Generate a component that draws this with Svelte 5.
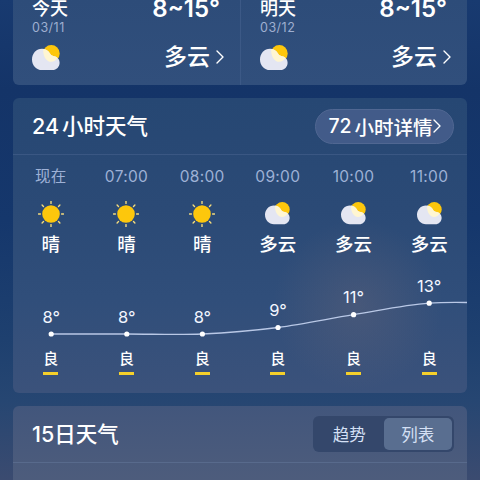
<script lang="ts">
	type Sky = 'sunny' | 'cloudy';

	const days = [
		{ name: '今天', date: '03/11', range: '8~15°', text: '多云' },
		{ name: '明天', date: '03/12', range: '8~15°', text: '多云' }
	];

	const hours: { time: string; sky: Sky; text: string; temp: number; y: number; air: string }[] = [
		{ time: '现在', sky: 'sunny', text: '晴', temp: 8, y: 66, air: '良' },
		{ time: '07:00', sky: 'sunny', text: '晴', temp: 8, y: 66, air: '良' },
		{ time: '08:00', sky: 'sunny', text: '晴', temp: 8, y: 66, air: '良' },
		{ time: '09:00', sky: 'cloudy', text: '多云', temp: 9, y: 59.5, air: '良' },
		{ time: '10:00', sky: 'cloudy', text: '多云', temp: 11, y: 46.7, air: '良' },
		{ time: '11:00', sky: 'cloudy', text: '多云', temp: 13, y: 35.2, air: '良' }
	];

	const STEP = 75.6;
	const rays = [0, 45, 90, 135, 180, 225, 270, 315];
	const px = (i: number) => 38.2 + i * STEP;

	// Smooth line through all hours, running on past the right edge
	const curve = $derived.by(() => {
		const pts = [...hours.map((h, i) => ({ x: px(i), y: h.y })), { x: px(6), y: 35.2 }];
		let d = `M${pts[0].x} ${pts[0].y}`;
		for (let i = 0; i < pts.length - 1; i++) {
			const a = pts[Math.max(i - 1, 0)];
			const b = pts[i];
			const c = pts[i + 1];
			const e = pts[Math.min(i + 2, pts.length - 1)];
			d += ` C${b.x + STEP / 3} ${b.y + (c.y - a.y) / 6} ${c.x - STEP / 3} ${c.y - (e.y - b.y) / 6} ${c.x} ${c.y}`;
		}
		return d;
	});

	let view = $state('列表');
</script>

{#snippet cloud(width: number)}
	<svg class="icon" {width} height={(width * 25) / 28} viewBox="0 0 28 25">
		<circle cx="19.3" cy="8.4" r="8.4" fill="#fdc70c" />
		<path
			d="M10 3.8c3.500 0 6.500 1.800 8 4.800.8 1.500 2 2.400 4.200 2.700 3.200.5 5.400 3.200 5.400 6.400 0 4-3 7.300-7.200 7.300H10C4.300 25 0 20.300 0 14.400S4.300 3.800 10 3.800z"
			fill="#e4e6f2"
		/>
		<path
			d="M11.200 5.400c0-.5 0-.9.1-1.400 3 .3 5.400 2 6.700 4.600.8 1.500 2 2.400 4.200 2.700 1.300.2 2.400.8 3.300 1.600-1.500 2.300-3.700 3.900-6.300 3.900-4.400 0-8-5-8-11.400z"
			fill="#fff6d2"
		/>
	</svg>
{/snippet}

{#snippet sun()}
	<svg class="icon" width="26" height="26" viewBox="-13 -13 26 26">
		<circle r="8.800" fill="#fdc70c" />
		{#each rays as angle (angle)}
			<line
				x1="0"
				y1="-10.600"
				x2="0"
				y2="-12.600"
				stroke="#f6dc7c"
				stroke-width="1.400"
				stroke-linecap="round"
				transform="rotate({angle})"
			/>
		{/each}
	</svg>
{/snippet}

{#snippet chevron(width: number, height: number)}
	<svg {width} {height} viewBox="0 0 8 14">
		<path d="M1 1l6 6-6 6" fill="none" stroke="#fff" stroke-width="1.400" stroke-linecap="round" stroke-linejoin="round" />
	</svg>
{/snippet}

<main>
	<section class="card days">
		{#each days as day (day.name)}
			<div class="day">
				<div class="row">
					<span class="name">{day.name}</span>
					<span class="range">{day.range}</span>
				</div>
				<div class="date">{day.date}</div>
				<div class="row weather">
					{@render cloud(28)}
					<span class="sky">{day.text}{@render chevron(8, 14)}</span>
				</div>
			</div>
		{/each}
	</section>

	<section class="card hourly">
		<header>
			<h2><span class="num">24</span>小时天气</h2>
			<button class="more"><span class="num">72</span>小时详情{@render chevron(8, 14)}</button>
		</header>
		<div class="hours">
			{#each hours as hour (hour.time)}
				<div class="hour">
					<span class="time">{hour.time}</span>
					<span class="glyph">
						{#if hour.sky === 'sunny'}
							{@render sun()}
						{:else}
							{@render cloud(25)}
						{/if}
					</span>
					<span class="text">{hour.text}</span>
				</div>
			{/each}
		</div>
		<svg class="chart" width="454" height="80" viewBox="0 0 454 80">
			<path d={curve} fill="none" stroke="#b9c8e6" stroke-width="1.300" />
			{#each hours as hour, i (hour.time)}
				<circle cx={px(i)} cy={hour.y} r="2.600" fill="#fff" />
				<text x={px(i)} y={hour.y - 11.5} text-anchor="middle">{hour.temp}°</text>
			{/each}
		</svg>
		<div class="hours air">
			{#each hours as hour (hour.time)}
				<span class="level">{hour.air}</span>
			{/each}
		</div>
	</section>

	<section class="card daily">
		<header>
			<h2>15日天气</h2>
			<div class="switch">
				{#each ['趋势', '列表'] as option (option)}
					<button class:active={view === option} onclick={() => (view = option)}>{option}</button>
				{/each}
			</div>
		</header>
	</section>
</main>

<style>
	:global(body) {
		overflow: hidden;
	}
	main {
		box-sizing: border-box;
		height: 480px;
		padding: 0 13px;
		display: flex;
		flex-direction: column;
		gap: 13px;
		overflow: hidden;
		color: #fff;
		font-family: Inter, 'Noto Sans CJK SC', sans-serif;
		background: linear-gradient(#183a70 0, #143468 90px, #15376c 220px, #1e406f 340px, #264672 400px, #3b4b70 480px);
	}
	.card {
		flex: none;
		border-radius: 6px;
		overflow: hidden;
	}
	.icon,
	.chart {
		display: block;
	}
	button {
		font: inherit;
		color: inherit;
		border: 0;
		padding: 0;
	}
	.days {
		display: grid;
		grid-template-columns: 1fr 1fr;
		height: 85px;
		border-radius: 0 0 6px 6px;
		background: linear-gradient(#2d4c79, #314f7c);
	}
	.day {
		padding: 0 16px 0 19px;
	}
	.day + .day {
		border-left: 1px solid #3c5986;
	}
	.row {
		display: flex;
		justify-content: space-between;
		align-items: center;
	}
	.name {
		font-size: 18px;
		line-height: 18px;
		font-weight: 500;
	}
	.range {
		padding-right: 4px;
		font-size: 24px;
		line-height: 18px;
		font-weight: 600;
	}
	.date {
		margin-top: 2px;
		font-size: 12.500px;
		line-height: 16px;
		letter-spacing: 0.5px;
		color: #9fafd0;
	}
	.weather {
		margin-top: 6px;
		height: 30px;
	}
	.sky {
		display: flex;
		align-items: center;
		gap: 6px;
		font-size: 23px;
		line-height: 30px;
		font-weight: 500;
	}
	.hourly {
		height: 295px;
		background: radial-gradient(circle 85px at 345px 207px, rgba(112, 105, 120, 0.35), transparent),
			linear-gradient(#264773 0, #2b4a76 110px, #304e7a 200px, #3b527b 295px);
	}
	header {
		box-sizing: border-box;
		height: 57px;
		padding: 0 13px 0 19px;
		display: flex;
		align-items: center;
		justify-content: space-between;
		border-bottom: 1px solid #3a5783;
	}
	h2 {
		margin: 0;
		font-size: 21.500px;
		line-height: 30px;
		font-weight: 500;
	}
	.num {
		margin-right: 3px;
	}
	.more {
		box-sizing: border-box;
		width: 139px;
		height: 35px;
		border: 1px solid #506792;
		border-radius: 18px;
		background: #425b89;
		display: flex;
		align-items: center;
		justify-content: center;
		font-size: 19.500px;
		font-weight: 500;
	}
	.hours {
		display: grid;
		grid-template-columns: repeat(6, 1fr);
	}
	.hour {
		display: flex;
		flex-direction: column;
		align-items: center;
	}
	.time {
		margin-top: 12px;
		font-size: 15.500px;
		line-height: 20px;
		letter-spacing: 0.3px;
		color: #9eb1d6;
	}
	.glyph {
		margin-top: 13px;
		height: 27px;
		display: flex;
		align-items: center;
	}
	.text {
		margin-top: 5px;
		font-size: 18.500px;
		line-height: 24px;
		font-weight: 500;
	}
	.chart {
		margin-top: 12px;
	}
	.chart text {
		font-size: 16.500px;
		fill: #f2f6ff;
	}
	.level {
		display: flex;
		flex-direction: column;
		align-items: center;
		font-size: 15px;
		line-height: 22px;
		font-weight: 500;
	}
	.level::after {
		content: '';
		width: 15px;
		height: 2.500px;
		margin-top: 2px;
		background: #f5d02b;
	}
	.daily {
		height: 120px;
		background: linear-gradient(#42567c, #4b5b7c 57px, #525f7c 120px);
	}
	.daily header {
		border-bottom-color: #586a8c;
	}
	.switch {
		box-sizing: border-box;
		width: 141px;
		height: 36px;
		padding: 2px;
		display: grid;
		grid-template-columns: 1fr 1fr;
		border-radius: 6px;
		background: #34476b;
	}
	.switch button {
		border-radius: 5px;
		background: transparent;
		font-size: 16.500px;
		color: #d5e0f5;
	}
	.switch .active {
		background: #596e90;
	}
</style>
